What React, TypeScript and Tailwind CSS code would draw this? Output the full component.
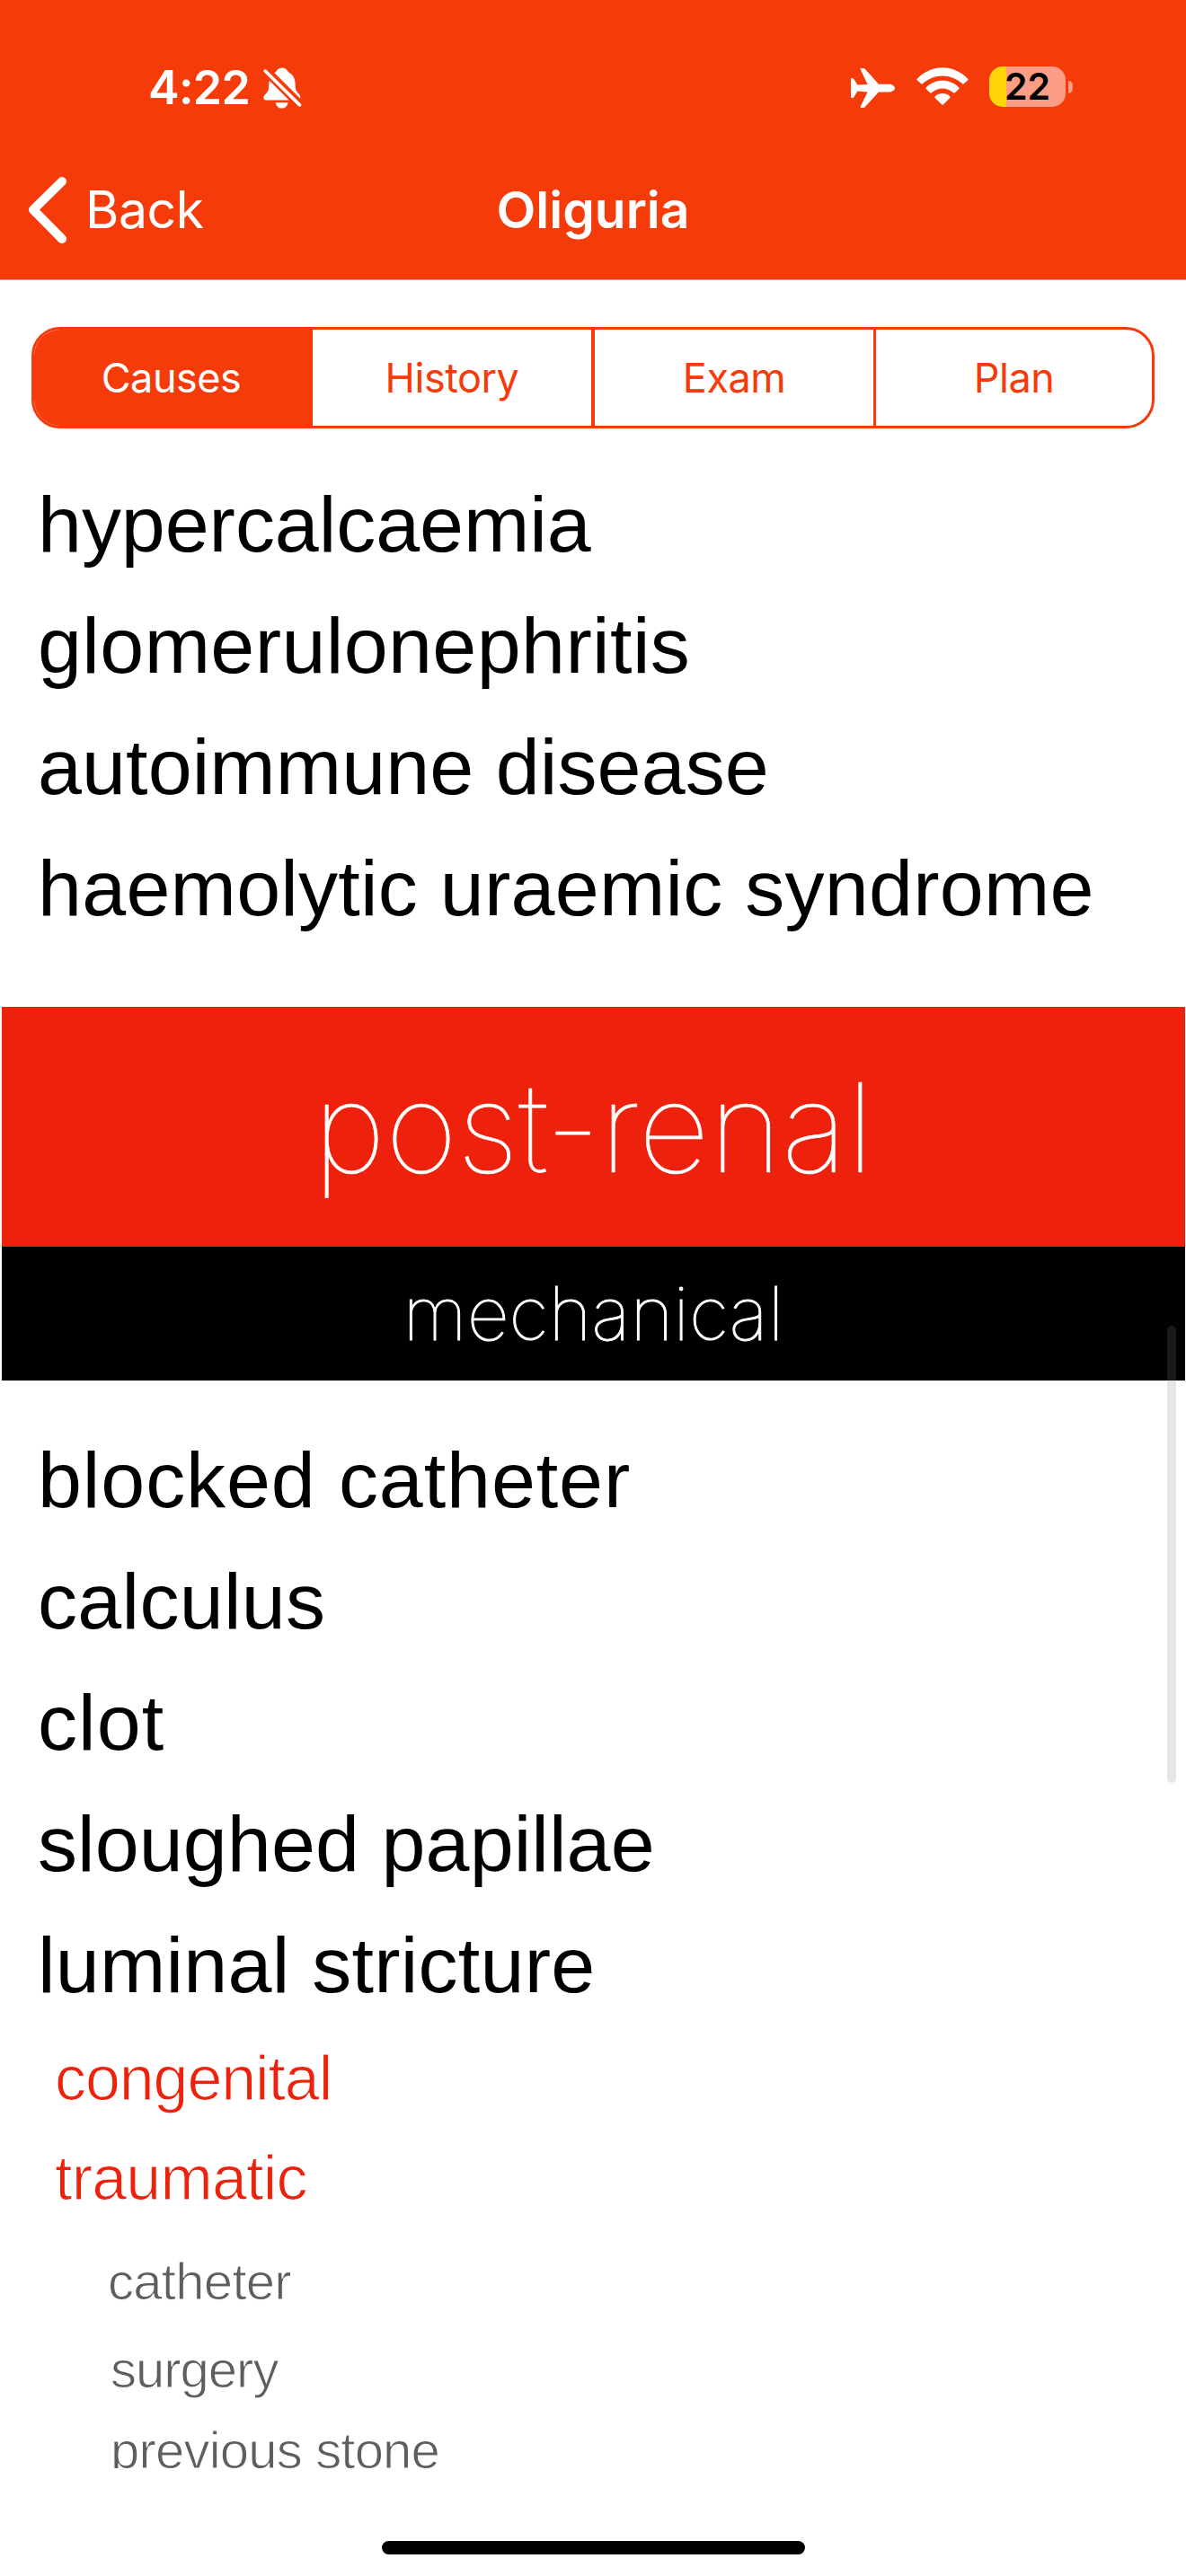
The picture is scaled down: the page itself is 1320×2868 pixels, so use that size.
const renalCauses = [
  { text: 'hypercalcaemia', spacing: 'tracking-[-0.05px]' },
  { text: 'glomerulonephritis', spacing: 'tracking-[0.4px]' },
  { text: 'autoimmune disease', spacing: 'tracking-[0.1px]' },
  { text: 'haemolytic uraemic syndrome', spacing: 'tracking-[0.25px]' },
];

const mechanicalCauses = [
  { text: 'blocked catheter', spacing: 'tracking-[0.9px]' },
  { text: 'calculus', spacing: 'tracking-[0.3px]' },
  { text: 'clot', spacing: 'tracking-[1.1px]' },
  { text: 'sloughed papillae', spacing: 'tracking-[0.1px]' },
  { text: 'luminal stricture', spacing: 'tracking-[0.25px]' },
];

function CauseList({ items, className }: { items: { text: string; spacing: string }[]; className: string }) {
  return (
    <ul className={className}>
      {items.map((item) => (
        <li key={item.text} className="whitespace-nowrap pl-[42px] text-[88px] leading-[135px]">
          <span className={item.spacing}>{item.text}</span>
        </li>
      ))}
    </ul>
  );
}

function BellOff() {
  return (
    <svg className="mt-[75px] ml-[13px] h-[46px] w-[43px] shrink-0" viewBox="0 0 43 46">
      <path d="M12.500 6.200 C14.500 5 15.200 2 18.500 .9 C20.500 .2 22 .2 23.800 1 C26.500 2 27 4.800 29 6 C33.500 8.500 35.500 13 35.600 18.500 C35.700 24 36.500 27 40 30 C41.200 31.200 41.400 33 41.200 34.800 Z" fill="white" />
      <path d="M6.800 14.800 L28.700 36.400 H3.200 C.8 36.400 .2 34.600 .5 32.900 C1 30.500 4.800 28.500 5.600 25.500 C6.500 22 5.800 18 6.800 14.800 Z" fill="white" />
      <path d="M13.700 39.200 H27.500 C27 43 24.200 45.600 20.600 45.600 C17 45.600 14.200 43 13.700 39.200 Z" fill="white" />
      <path d="M2.200 4 L40.500 41.900" stroke="white" strokeWidth="3.600" strokeLinecap="round" />
    </svg>
  );
}

function Plane() {
  return (
    <svg className="h-[44px] w-[49px]" viewBox="0 0 49 44">
      <path d="M0 12 Q0 11 1 11 H1.800 Q2.600 11 3.100 11.700 L7.400 18.600 L18.600 18 L10.700 1.200 Q10.300 0 11.500 0 H13.800 Q15 0 16 1 L31 17.700 H42 C46 17.700 49 19.800 49 22 C49 24.200 46 26.500 42 26.500 H31 L16 42.800 Q15 44 13.800 44 H11.500 Q10.300 44 10.700 42.600 L18.600 26.500 L7.400 25.500 L3.100 32.500 Q2.600 33 1.800 33 H1 Q0 33 0 32 Z" fill="white" />
    </svg>
  );
}

function Wifi() {
  return (
    <svg className="ml-[24px] h-[42px] w-[58px]" viewBox="0 0 58 42">
      <path d="M.8 12.700 Q0 13.500 .8 14.300 L5.300 18.300 Q6 19 6.800 18.300 C19.500 6.700 38.500 6.700 51.200 18.300 Q52 19 52.700 18.300 L57.200 14.300 Q58 13.500 57.200 12.700 C41.500 -4 16.500 -4 .8 12.700 Z" fill="white" />
      <path d="M10.700 22.500 Q10 23.200 10.700 24 L15.200 28.300 Q16 29 16.800 28.300 C24 22 34 22 41.200 28.300 Q42 29 42.800 28.300 L47.300 24 Q48 23.200 47.300 22.500 C37 12.300 21 12.300 10.700 22.500 Z" fill="white" />
      <path d="M20.700 32.300 Q20 33.100 20.700 34 L28.300 41.400 Q29 42 29.700 41.400 L37.300 34 Q38 33.100 37.300 32.300 C32.500 28 25.500 28 20.700 32.300 Z" fill="white" />
    </svg>
  );
}

export default function App() {
  return (
    <div className="relative flex h-[2868px] w-[1320px] flex-col overflow-hidden bg-white font-['Liberation_Sans',sans-serif]">
      <header className="flex h-[312px] shrink-0 flex-col border-b border-[#b9b4b2] bg-[#f63b0b] text-white">
        <div className="flex h-[156px] shrink-0">
          <div className="flex w-[660px] pl-[165px]">
            <span className="mt-[63px] h-[70px] w-[115px] whitespace-nowrap font-['Inter',sans-serif] text-[52px] leading-[70px] font-semibold tracking-[-0.7px]">4:22</span>
            <BellOff />
          </div>
          <div className="flex pt-[75px] pl-[287px]">
            <div className="pt-[1px]"><Plane /></div>
            <Wifi />
            <div className="-mt-[1px] ml-[23px] flex h-[45px] w-[85px] items-center justify-center rounded-[15px] bg-[linear-gradient(90deg,#ffd60a_19px,#fc9d85_19px)] font-['Inter',sans-serif] text-[41px] font-semibold text-black">22</div>
            <div className="mt-[15px] ml-[3px] h-[14px] w-[5px] rounded-r-full bg-[#fc9d85]" />
          </div>
        </div>
        <div className="grid h-[155px] grid-cols-3 items-center font-['Inter',sans-serif] text-[57px]">
          <div className="flex items-center pl-[31px]">
            <svg className="h-[74px] w-[43px]" viewBox="0 0 43 74"><path d="M38 5 L6 36.500 L38 69" fill="none" stroke="white" strokeWidth="10" strokeLinecap="round" strokeLinejoin="round" /></svg>
            <span className="ml-[21px] tracking-[-0.4px]">Back</span>
          </div>
          <div className="text-center font-semibold">Oliguria</div>
        </div>
      </header>
      <nav className="mx-[35px] mt-[52px] grid h-[113px] w-[1250px] shrink-0 grid-cols-[310px_310px_314px_310px] overflow-hidden rounded-[32px] border-[3px] border-[#f63b0b] text-center font-['Inter',sans-serif] text-[45px] leading-[107px] tracking-[-0.5px] text-[#f63b0b]">
        <div className="bg-[#f63b0b] pr-[5px] text-white">Causes</div>
        <div>History</div>
        <div className="border-l-[4px] border-[#f63b0b]">Exam</div>
        <div className="border-l-[3px] border-[#f63b0b]">Plan</div>
      </nav>
      <main className="flex h-[2271px] shrink-0 flex-col overflow-hidden text-black">
        <CauseList items={renalCauses} className="mt-[39px]" />
        <div className="mt-[65px] mr-[1px] ml-[2px] flex h-[267px] shrink-0 items-center justify-center bg-[#ee220c] font-['Inter',sans-serif] text-[138px] font-thin text-white [-webkit-text-stroke:0.7px_white]">post-renal</div>
        <div className="mr-[1px] ml-[2px] flex h-[149px] shrink-0 items-center justify-center bg-black font-['Inter',sans-serif] text-[82px] font-thin text-white [-webkit-text-stroke:1px_white]">mechanical</div>
        <CauseList items={mechanicalCauses} className="mt-[43px]" />
        <ul className="mt-[4px] pl-[61px] text-[70px] leading-[111px] text-[#ee220c] [-webkit-text-stroke:1.2px_white]">
          <li className="tracking-[-1.1px]">congenital</li>
          <li className="tracking-[-0.8px]">traumatic</li>
        </ul>
        <ul className="mt-[10px] pl-[120px] text-[58px] leading-[98px] text-[#5e5e5e] [-webkit-text-stroke:1px_white]">
          <li className="tracking-[-0.7px]">catheter</li>
          <li className="pl-[3px] tracking-[-1px]">surgery</li>
          <li className="-mt-[8px] pl-[3px] tracking-[-0.8px] whitespace-nowrap">previous stone</li>
        </ul>
      </main>
      <div className="absolute top-[1476px] left-[1299px] h-[509px] w-[10px] rounded-full bg-[#808080]/20" />
      <div className="absolute top-[2829px] left-[425px] h-[15px] w-[471px] rounded-full bg-black" />
    </div>
  );
}
